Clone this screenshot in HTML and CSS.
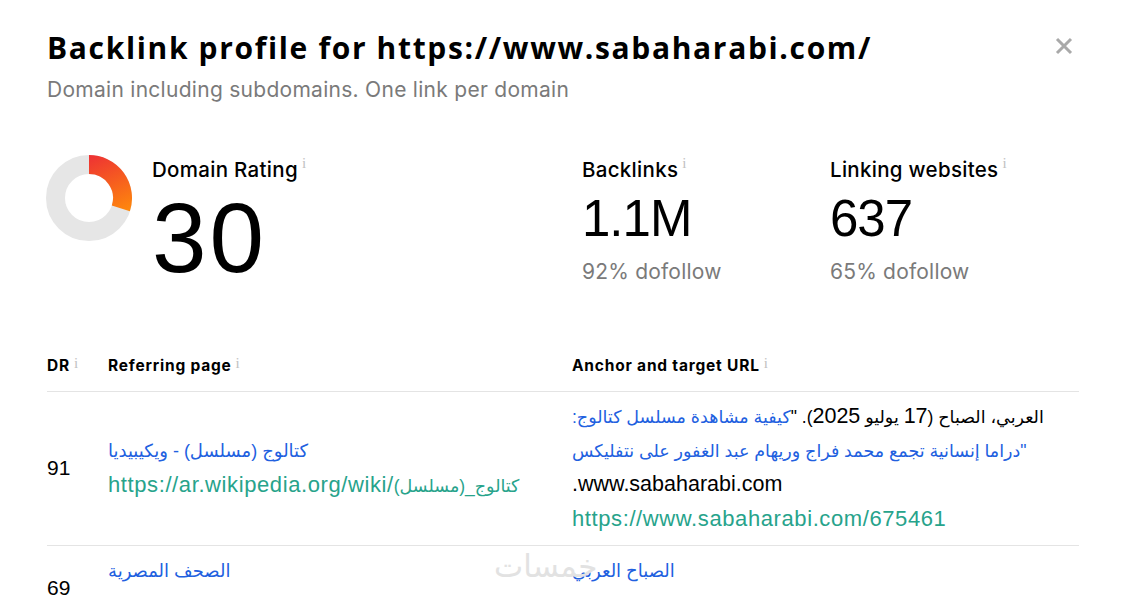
FILE: index.html
```html
<!DOCTYPE html>
<html lang="en">
<head>
<meta charset="utf-8">
<title>Backlink profile</title>
<link rel="stylesheet" href="styles.css">
</head>
<body>
<div class="modal">
  <button class="close" aria-label="Close">
    <svg width="18" height="18" viewBox="0 0 18 18"><path d="M2 2L16 16M16 2L2 16" stroke="#a9a9a9" stroke-width="3" fill="none"/></svg>
  </button>
  <h1 class="title">Backlink profile for https://www.sabaharabi.com/</h1>
  <p class="subtitle">Domain including subdomains. One link per domain</p>

  <div class="stats">
    <div class="stat stat-dr">
      <svg class="donut" width="86" height="86" viewBox="0 0 86 86">
        <defs>
          <linearGradient id="g" gradientUnits="userSpaceOnUse" x1="48" y1="0" x2="76" y2="62">
            <stop offset="0" stop-color="#ee3333"/>
            <stop offset="1" stop-color="#ff8c0a"/>
          </linearGradient>
        </defs>
        <circle cx="43" cy="43" r="33.5" fill="none" stroke="#e6e6e6" stroke-width="19"/>
        <path d="M43 9.5 A33.5 33.5 0 0 1 74.86 53.35" fill="none" stroke="url(#g)" stroke-width="19"/>
      </svg>
      <div class="stat-body">
        <div class="label">Domain Rating<span class="info">i</span></div>
        <div class="big">30</div>
      </div>
    </div>
    <div class="stat stat-bl">
      <div class="label">Backlinks<span class="info">i</span></div>
      <div class="num">1.1M</div>
      <div class="sub">92% dofollow</div>
    </div>
    <div class="stat stat-lw">
      <div class="label">Linking websites<span class="info">i</span></div>
      <div class="num">637</div>
      <div class="sub">65% dofollow</div>
    </div>
  </div>

  <div class="table">
    <div class="row head">
      <div class="c-dr">DR<span class="info">i</span></div>
      <div class="c-ref">Referring page<span class="info">i</span></div>
      <div class="c-anc">Anchor and target URL<span class="info">i</span></div>
    </div>
    <div class="row">
      <div class="c-dr">91</div>
      <div class="c-ref">
        <a class="link" href="#" dir="auto">كتالوج (مسلسل) - ويكيبيديا</a>
        <a class="url" href="#">https://ar.wikipedia.org/wiki/<span class="ar">كتالوج_(مسلسل)</span></a>
      </div>
      <div class="c-anc">
        <p class="anchor" dir="rtl">العربي، الصباح (<span class="lat">17</span> يوليو <span class="lat">2025</span>). "<a class="alink" href="#">كيفية مشاهدة مسلسل كتالوج:<br>"دراما إنسانية تجمع محمد فراج وريهام عبد الغفور على نتفليكس</a> <span class="lat">www.sabaharabi.com.</span></p>
        <a class="url" href="#">https://www.sabaharabi.com/675461</a>
      </div>
    </div>
    <div class="row">
      <div class="c-dr">69</div>
      <div class="c-ref">
        <a class="link" href="#" dir="auto">الصحف المصرية</a>
        <a class="url" href="#">https://www.alsohofalmasria.com/</a>
      </div>
      <div class="c-anc">
        <a class="link" href="#" dir="auto">الصباح العربي</a>
        <a class="url" href="#">https://www.sabaharabi.com/</a>
      </div>
    </div>
  </div>
  <div class="watermark">خمسات</div>
</div>
</body>
</html>
```

FILE: styles.css
```css
html, body {
  margin: 0;
  padding: 0;
  background: #fff;
  overflow: hidden;
}
body {
  font-family: Inter, "Noto Sans", sans-serif;
  color: #000;
}
.modal {
  position: relative;
  padding: 30px 48px 0 47px;
}
.close {
  position: absolute;
  top: 37px;
  left: 1055px;
  width: 18px;
  height: 18px;
  padding: 0;
  border: 0;
  background: none;
}
.close svg { display: block; }
.title {
  margin: 0;
  font-family: "Open Sans", Inter, sans-serif;
  font-size: 30px;
  line-height: 36px;
  font-weight: 700;
  letter-spacing: 1.65px;
}
.subtitle {
  margin: 10px 0 0;
  font-size: 21px;
  line-height: 28px;
  color: #7a7a7a;
  letter-spacing: 0.28px;
}
.stats {
  display: flex;
  margin-top: 52px;
}
.stat-dr {
  display: flex;
  width: 535px;
}
.donut {
  display: block;
  margin: -1px 0 0 -1px;
}
.stat-body {
  margin-left: 20px;
}
.stat-bl { width: 248px; }
.label {
  font-size: 20.5px;
  line-height: 28px;
  font-weight: 500;
  letter-spacing: 0.3px;
}
.info {
  font-family: "Liberation Serif", serif;
  font-size: 15px;
  font-weight: 400;
  color: #c2c2c2;
  vertical-align: top;
  line-height: 14px;
  margin-left: 4px;
  letter-spacing: 0;
}
.big {
  font-family: "Liberation Sans", Arial, sans-serif;
  font-size: 98px;
  line-height: 98px;
  font-weight: 400;
  letter-spacing: 3px;
  margin-top: 5px;
}
.num {
  font-family: "Liberation Sans", Arial, sans-serif;
  font-size: 51px;
  line-height: 51px;
  font-weight: 400;
  letter-spacing: -1px;
  margin-top: 9px;
}
.sub {
  margin-top: 14px;
  font-size: 21px;
  line-height: 28px;
  color: #7a7a7a;
  letter-spacing: 0.2px;
}
.table {
  margin-top: 69px;
}
.row {
  display: flex;
  align-items: center;
  border-bottom: 1px solid #e4e4e4;
  padding: 8px 0 9px;
  font-family: "Liberation Sans", "DejaVu Sans", sans-serif;
  font-size: 21px;
  line-height: 34px;
}
.row.head {
  font-family: Inter, sans-serif;
  font-size: 15.5px;
  font-weight: 700;
  line-height: 20px;
  letter-spacing: 0.8px;
  padding: 0 0 15px;
}
.c-dr { width: 61px; flex: none; }
.c-ref { width: 464px; flex: none; }
.c-anc { width: 507px; flex: none; }
.link, .url, .alink {
  text-decoration: none;
}
.link, .url {
  display: block;
  text-align: left;
}
.link { color: #2160df; font-size: 18px; }
.alink { color: #2160df; }
.url {
  color: #27a38b;
  font-size: 22px;
  letter-spacing: 0.6px;
}
.url .ar {
  font-size: 17.5px;
  letter-spacing: 0;
  line-height: 20px;
}
.anchor {
  margin: 0;
  text-align: left;
  font-size: 17.5px;
}
.lat {
  font-size: 21.5px;
  line-height: 20px;
}
.watermark {
  position: absolute;
  left: 494px;
  top: 544px;
  font-family: "DejaVu Sans", sans-serif;
  font-size: 31px;
  line-height: 44px;
  color: #e2e2e2;
  pointer-events: none;
}
```
